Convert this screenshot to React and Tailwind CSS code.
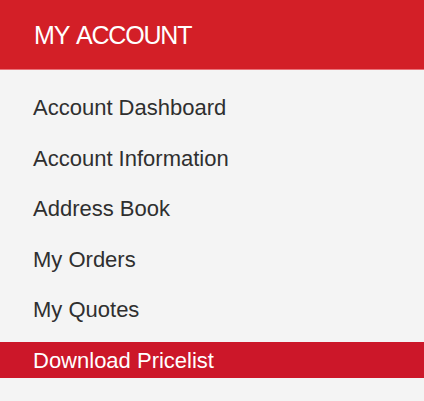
import React from 'react';

// Sidebar menu for the customer account area
const links = [
  { label: 'Account Dashboard' },
  { label: 'Account Information' },
  { label: 'Address Book' },
  { label: 'My Orders' },
  { label: 'My Quotes' },
  { label: 'Download Pricelist', active: true },
];

const App = () => {
  return (
    <div
      className="w-[424px] h-[401px] bg-[#f4f4f4] overflow-hidden"
      style={{ fontFamily: '"Liberation Sans", Arial, sans-serif' }}
    >
      {/* Title bar */}
      <div className="h-[70px] bg-[#d31f27] flex items-center pl-[34px] border-b border-[#e9737a]">
        <h2 className="text-white text-[25px] tracking-[-1.2px] [word-spacing:3px] leading-none pt-[1px]">
          MY ACCOUNT
        </h2>
      </div>

      {/* Links */}
      <ul className="flex flex-col gap-[14.5px] pt-[19px]">
        {links.map((link) => (
          <li key={link.label}>
            <a
              href="#"
              className={`block h-[36px] leading-[37px] pl-[33px] text-[22px] ${
                link.active ? 'bg-[#cc1729] text-white' : 'text-[#2f2f2f]'
              }`}
            >
              {link.label}
            </a>
          </li>
        ))}
      </ul>
    </div>
  );
};

export default App;
